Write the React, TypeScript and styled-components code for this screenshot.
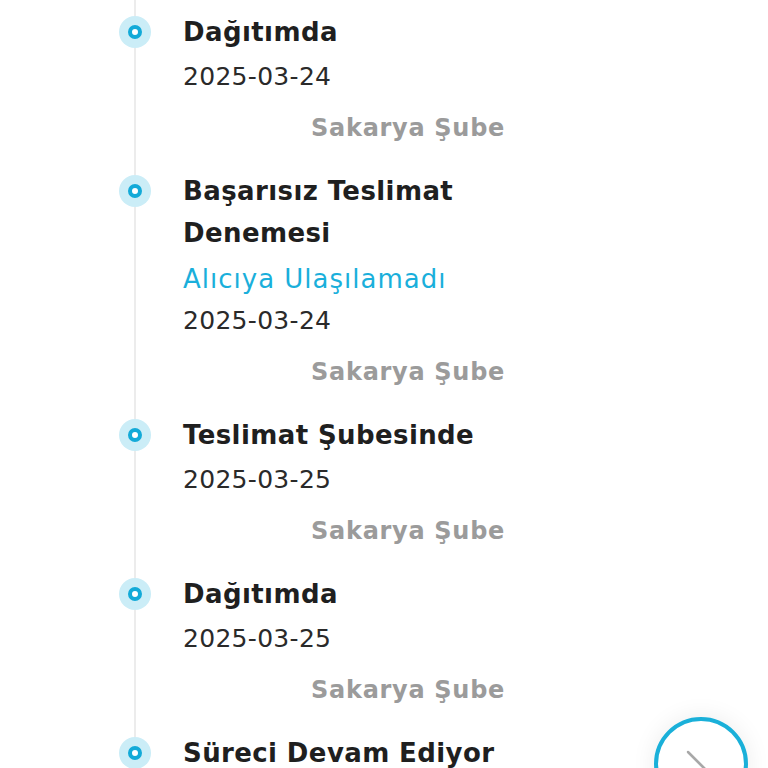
import React from 'react';
import styled, { createGlobalStyle } from 'styled-components';

const GlobalStyle = createGlobalStyle`
    html, body {
        margin:0;
        padding:0;
        background:#ffffff;
        overflow:hidden;
    }
    body {
        font-family:"DejaVu Sans", Inter, "Noto Sans", sans-serif;
    }
`

const Timeline = styled.div`
    padding:11px 0 40px 119px;
    background:linear-gradient(#ececec, #ececec) no-repeat 134px 0 / 2px 100%;
    display:flex;
    flex-direction:column;
    gap:21px;
`

const Item = styled.div`
    display:grid;
    grid-template-columns:32px 322px;
    column-gap:32px;
    align-items:start;
`

const Marker = styled.span`
    width:32px;
    height:32px;
    margin-top:5px;
    border-radius:50%;
    background:#cbedf7;
    display:flex;
    align-items:center;
    justify-content:center;

    &::after {
        content:'';
        width:6px;
        height:6px;
        border-radius:50%;
        background:#ffffff;
        border:4px solid #13aad8;
    }
`

const Body = styled.div`
    display:flex;
    flex-direction:column;
`

const Title = styled.div`
    font-size:26px;
    line-height:42px;
    font-weight:700;
    letter-spacing:0.4px;
    color:#1f1f1f;
    margin-bottom:3px;
`

const Note = styled.div`
    font-size:26px;
    line-height:42px;
    font-weight:400;
    letter-spacing:1px;
    color:#1aafdb;
    margin-top:1px;
`

const DateEl = styled.div`
    font-size:25px;
    line-height:42px;
    font-weight:400;
    letter-spacing:0.3px;
    color:#2a2a2a;
`

const Branch = styled.div`
    margin-top:9px;
    font-size:24px;
    line-height:42px;
    font-weight:700;
    letter-spacing:0.7px;
    color:#9b9b9b;
    text-align:right;
`

const Fab = styled.button`
    position:fixed;
    right:20px;
    bottom:-43px;
    width:94px;
    height:94px;
    border-radius:50%;
    border:4px solid #1ab0d9;
    background:#ffffff;
    box-shadow:0 0 24px rgba(0, 0, 0, 0.08);
    padding:0;
    cursor:pointer;
`

const steps = [
    { title: 'Dağıtımda', date: '2025-03-24', branch: 'Sakarya Şube' },
    { title: 'Başarısız Teslimat Denemesi', note: 'Alıcıya Ulaşılamadı', date: '2025-03-24', branch: 'Sakarya Şube' },
    { title: 'Teslimat Şubesinde', date: '2025-03-25', branch: 'Sakarya Şube' },
    { title: 'Dağıtımda', date: '2025-03-25', branch: 'Sakarya Şube' },
    { title: 'Süreci Devam Ediyor', date: '2025-03-26', branch: 'Sakarya Şube' },
]

const App = () => {
    return (
        <>
            <GlobalStyle />
            <Timeline>
                {steps.map((s, i) => (
                    <Item key={i}>
                        <Marker />
                        <Body>
                            <Title>{s.title}</Title>
                            {s.note && <Note>{s.note}</Note>}
                            <DateEl>{s.date}</DateEl>
                            <Branch>{s.branch}</Branch>
                        </Body>
                    </Item>
                ))}
            </Timeline>
            <Fab aria-label="next">
                <svg width="94" height="94" viewBox="0 0 94 94" style={{ position: 'absolute', left: -4, top: -4 }}>
                    <polyline points="34,35 58,59 34,83" fill="none" stroke="#a8a8a8" strokeWidth="2.5" strokeLinecap="round" strokeLinejoin="round" />
                </svg>
            </Fab>
        </>
    )
}

export default App;
